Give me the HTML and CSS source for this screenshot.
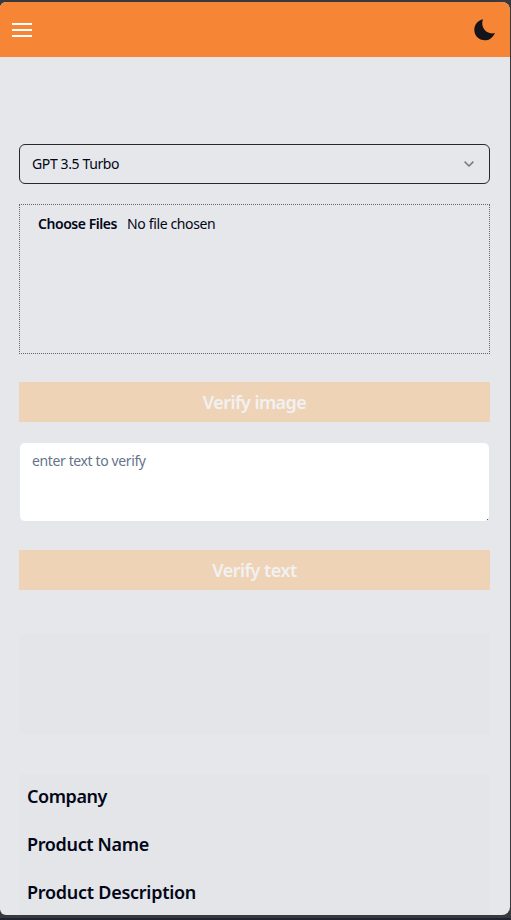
FILE: index.html
```
<!DOCTYPE html>
<html lang="en">
<head>
<meta charset="utf-8">
<title>Verify</title>
<link rel="stylesheet" href="styles.css">
</head>
<body>
<div class="screen">
  <header class="topbar">
    <svg class="menu" width="20" height="14" viewBox="0 0 20 14"><path d="M0 1h20M0 7h20M0 13h20" stroke="#fff" stroke-width="2"/></svg>
    <svg class="moon" width="22" height="22" viewBox="0 0 22 22"><path d="M9 .3C7.700 3.200 7.900 7.500 10.300 10.600C13 14.100 17 15.100 20.900 13.900C18.700 19 15 21.300 10.800 21.300C4.900 21.300.3 16.700.3 10.800C.3 6 3.800 1.300 9 .3Z" fill="#15141a"/></svg>
  </header>
  <main class="content">
    <div class="select"><span class="model">GPT 3.5 Turbo</span>
      <svg width="10" height="6" viewBox="0 0 10 6"><path d="M.6.6L5 5L9.400.6" fill="none" stroke="#737b80" stroke-width="1.500"/></svg>
    </div>
    <div class="drop"><span class="choose">Choose Files</span><span class="nofile">No file chosen</span></div>
    <button class="btn" disabled><span class="verify-image">Verify image</span></button>
    <div class="textbox"><span class="hint">enter text to verify</span><i class="grip"></i></div>
    <button class="btn" disabled><span class="verify-text">Verify text</span></button>
    <section class="result"></section>
    <section class="details">
      <h2><span class="company">Company</span></h2>
      <h2><span class="name">Product Name</span></h2>
      <h2><span class="description">Product Description</span></h2>
    </section>
  </main>
</div>
</body>
</html>
```
FILE: styles.css
```
* { box-sizing: border-box; }
body {
  margin: 0;
  height: 920px;
  padding: 2px 1px 0 0;
  overflow: hidden;
  background: linear-gradient(#38393c 918px, #1f2430 918px);
  font-family: "Noto Sans", "Open Sans", sans-serif;
  font-size: 14px;
  color: #020617;
}
.screen {
  height: 913px;
  overflow: hidden;
  border-radius: 6px 8px 8px 6px;
  background: #e5e7eb;
}
.topbar {
  height: 55px;
  padding: 0 14px 0 12px;
  display: flex;
  align-items: center;
  justify-content: space-between;
  background: #f78536;
}
.menu { margin-top: 1px; }
.content {
  padding: 87px 20px 0 19px;
  display: flex;
  flex-direction: column;
}
.content span { white-space: nowrap; }
.select {
  height: 40px;
  padding: 0 15px 0 12px;
  display: flex;
  align-items: center;
  justify-content: space-between;
  border: 1px solid #29292c;
  border-radius: 6px;
  line-height: 20px;
}
.model { letter-spacing: -0.38px; }
.drop {
  height: 150px;
  margin-top: 20px;
  padding: 9px 18px;
  display: flex;
  gap: 10px;
  border: 1px dotted #67686c;
  line-height: 20px;
}
.choose { width: 79px; font-weight: 600; letter-spacing: -0.45px; }
.nofile { letter-spacing: -0.36px; }
.btn {
  height: 40px;
  margin: 28px 0 0;
  padding: 0;
  border: 0;
  background: #efd3b6;
  color: #f1f1f2;
  font: 600 18px/28px "Noto Sans", "Open Sans", sans-serif;
}
.verify-image { letter-spacing: -0.58px; }
.verify-text { letter-spacing: -0.55px; }
.textbox {
  position: relative;
  height: 80px;
  margin-top: 20px;
  padding: 8px 12px;
  border: 1px solid #e2e8f0;
  border-radius: 6px;
  background: #fff;
  color: #64748b;
  line-height: 20px;
}
.hint { letter-spacing: -0.38px; }
.grip {
  position: absolute;
  right: 1px;
  bottom: 1px;
  width: 1px;
  height: 1px;
  background: #555;
}
.result {
  height: 100px;
  margin-top: 44px;
  background: #e3e5e8;
}
.details {
  height: 180px;
  margin-top: 40px;
  padding: 8px 7px;
  background: #e3e5e8;
}
h2 {
  margin: 0 0 20px;
  padding-left: 1px;
  font-size: 18px;
  line-height: 28px;
  font-weight: 600;
}
.company { letter-spacing: -0.43px; }
.name { letter-spacing: -0.35px; }
.description { letter-spacing: -0.27px; }
```
